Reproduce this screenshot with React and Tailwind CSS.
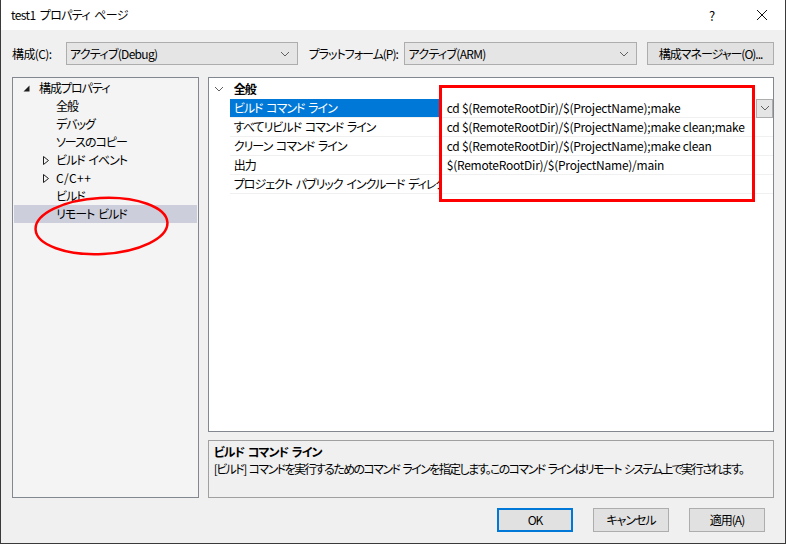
import React from "react";

const Chevron = ({ className = "" }) => (
  <svg width="10" height="6" viewBox="0 0 10 6" className={className}>
    <path d="M1 1 L5 5 L9 1" fill="none" stroke="#606060" strokeWidth="1" />
  </svg>
);

const SelectBox = ({ value, width }) => (
  <div className={`${width} h-[23px] bg-[#e5e5e5] border border-[#adadad] flex items-center justify-between pl-[3px] pr-[7px]`}>
    <span className="tracking-[-0.7px]">{value}</span>
    <Chevron />
  </div>
);

const Btn = ({ children, primary }) => (
  <div
    className={`w-[76px] h-[24px] bg-[#e1e1e1] flex items-center justify-center ${
      primary ? "border-2 border-[#0078d7]" : "border border-[#adadad]"
    }`}
  >
    {children}
  </div>
);

const treeItems = [
  { label: "全般" },
  { label: "デバッグ" },
  { label: "ソースのコピー" },
  { label: "ビルド イベント", expander: true },
  { label: "C/C++", expander: true },
  { label: "ビルド" },
  { label: "リモート ビルド", selected: true },
];

const rows = [
  { label: "ビルド コマンド ライン", value: "cd $(RemoteRootDir)/$(ProjectName);make", selected: true },
  { label: "すべてリビルド コマンド ライン", value: "cd $(RemoteRootDir)/$(ProjectName);make clean;make" },
  { label: "クリーン コマンド ライン", value: "cd $(RemoteRootDir)/$(ProjectName);make clean" },
  { label: "出力", value: "$(RemoteRootDir)/$(ProjectName)/main" },
  { label: "プロジェクト パブリック インクルード ディレクトリ", value: "" },
];

export default function App() {
  return (
    <div className="w-[786px] h-[544px] bg-[#f0f0f0] border-x border-b border-[#3a3a3a] flex flex-col relative overflow-hidden text-[12px] leading-none tracking-[-1px] [word-spacing:2px] text-black font-['Noto_Sans_CJK_JP',sans-serif] [font-feature-settings:'palt']">
      {/* title bar */}
      <div className="h-[30px] bg-white flex items-center shrink-0">
        <span className="pl-[10px] flex-1 tracking-[-0.6px]">test1 プロパティ ページ</span>
        <span className="w-[10px] text-[13px] mr-[37px]">?</span>
        <svg width="12" height="12" viewBox="0 0 12 12" className="mr-[17px]">
          <path d="M1 1 L11 11 M11 1 L1 11" stroke="#111" strokeWidth="1" />
        </svg>
      </div>

      <div className="px-[11px] pt-[12px] flex flex-col">
        {/* config row */}
        <div className="flex items-center h-[23px] whitespace-nowrap">
          <span className="w-[54px] tracking-[-0.6px]">構成(C):</span>
          <SelectBox value="アクティブ(Debug)" width="w-[232px]" />
          <span className="w-[96px] ml-[11px]">プラットフォーム(P):</span>
          <SelectBox value="アクティブ(ARM)" width="w-[233px]" />
          <div className="ml-[10px] w-[127px] h-[23px] bg-[#e1e1e1] border border-[#adadad] flex items-center justify-center">
            構成マネージャー(O)...
          </div>
        </div>

        {/* main */}
        <div className="flex mt-[12px] h-[421px]">
          {/* tree */}
          <div className="w-[187px] border border-[#828790] bg-[#f4f4f4] p-[1px]">
            <div className="h-[18px] flex items-center">
              <svg width="7" height="7" viewBox="0 0 7 7" className="ml-[9px] mr-[9px]">
                <path d="M6.5 0.5 L6.5 6.5 L0.5 6.5 Z" fill="#1e1e1e" />
              </svg>
              <span>構成プロパティ</span>
            </div>
            {treeItems.map((it) => (
              <div
                key={it.label}
                className={`h-[18px] flex items-center ${it.selected ? "bg-[#cccedb]" : ""}`}
              >
                <span className="w-[42px] flex justify-end pr-[7px]">
                  {it.expander && (
                    <svg width="6" height="9" viewBox="0 0 6 9">
                      <path d="M0.5 0.5 L5.5 4.5 L0.5 8.5 Z" fill="none" stroke="#1e1e1e" strokeWidth="1" />
                    </svg>
                  )}
                </span>
                <span className={it.label === "C/C++" ? "tracking-[0.4px]" : ""}>{it.label}</span>
              </div>
            ))}
          </div>

          {/* right column */}
          <div className="ml-[9px] w-[567px] flex flex-col">
            <div className="flex-1 border border-[#828790] bg-white">
              <div className="h-[21px] flex items-center">
                <span className="w-[21px] flex justify-center">
                  <Chevron />
                </span>
                <span className="font-bold pl-[4px]">全般</span>
              </div>
              {rows.map((r) => (
                <div key={r.label} className="h-[19px] flex">
                  <div className="w-[21px]" />
                  <div
                    className={`w-[210px] flex items-center pl-[4px] overflow-hidden whitespace-nowrap border-b border-r border-[#f0f0f0] ${
                      r.selected ? "bg-[#0078d7] text-white" : ""
                    }`}
                  >
                    {r.label}
                  </div>
                  <div className="flex-1 flex items-center pl-[7px] border-b border-[#f0f0f0] whitespace-nowrap tracking-[-0.25px] [word-spacing:0px]">
                    <span className="flex-1">{r.value}</span>
                    {r.selected && (
                      <div className="w-[17px] h-[19px] bg-[#e5e5e5] border border-[#adadad] flex items-center justify-center">
                        <Chevron />
                      </div>
                    )}
                  </div>
                </div>
              ))}
            </div>
            <div className="h-[58px] mt-[8px] border border-[#a0a0a0] bg-[#f0f0f0] px-[5px] pt-[5px] flex flex-col gap-[5px]">
              <span className="font-bold">ビルド コマンド ライン</span>
              <span className="whitespace-nowrap tracking-[-1.6px]">[ビルド] コマンドを実行するためのコマンド ラインを指定します。このコマンド ラインはリモート システム上で実行されます。</span>
            </div>
          </div>
        </div>

        {/* buttons */}
        <div className="flex justify-end gap-[20px] mt-[10px] pr-[9px]">
          <Btn primary>OK</Btn>
          <Btn>キャンセル</Btn>
          <Btn>適用(A)</Btn>
        </div>
      </div>

      {/* annotations */}
      <div className="absolute left-[438px] top-[85px] w-[316px] h-[117px] border-[3px] border-[#ff0000]" />
      <svg className="absolute left-[30px] top-[194px]" width="145" height="66" viewBox="0 0 145 66">
        <ellipse cx="70.5" cy="32" rx="66" ry="28" fill="none" stroke="#ff0000" strokeWidth="2.5" transform="rotate(-3 70.5 32)" />
      </svg>
    </div>
  );
}
